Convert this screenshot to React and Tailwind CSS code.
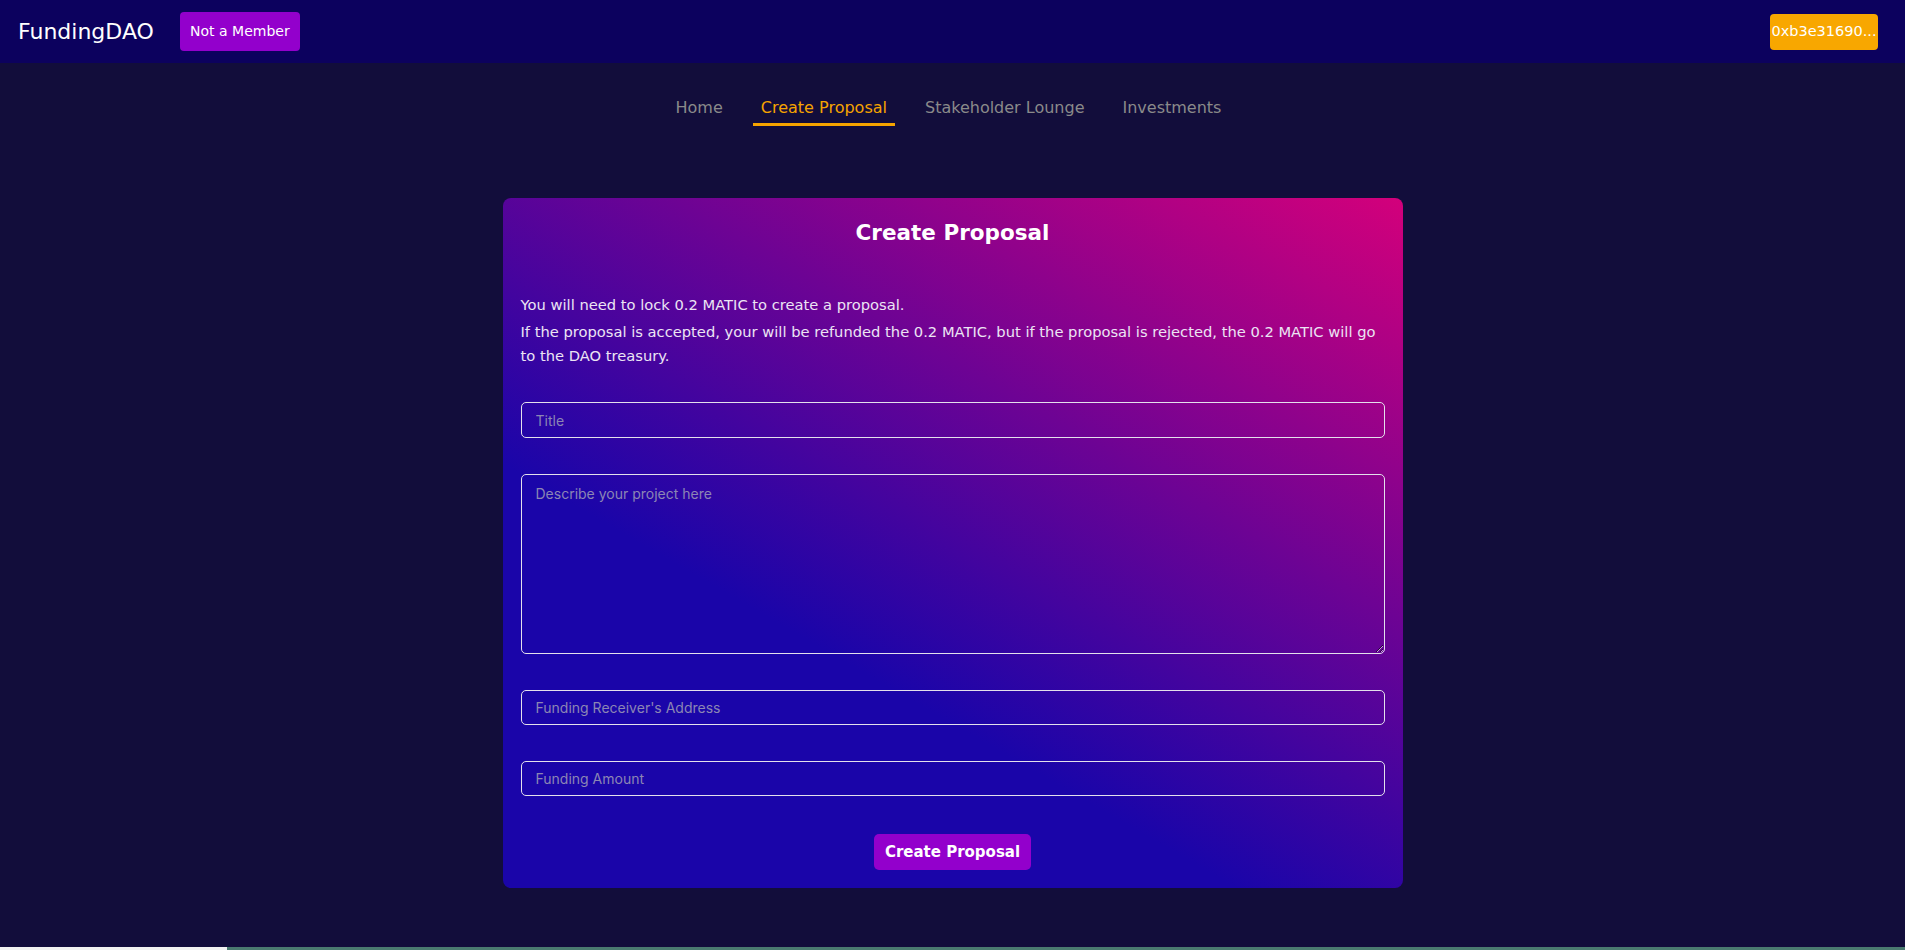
export default function App() {
  return (
    <div className="min-h-screen w-full bg-[#120d3b] flex flex-col font-['DejaVu_Sans',sans-serif]">
      <header className="h-[63px] bg-[#0c015e] flex items-center justify-between pl-[18px] pr-[27px]">
        <div className="flex items-center gap-[26px]">
          <span className="text-white text-[22px]">FundingDAO</span>
          <button className="bg-[#9300cc] text-white text-[14px] h-[39px] w-[120px] rounded-[4px]">Not a Member</button>
        </div>
        <button className="bg-[#f8a700] text-white text-[14.5px] h-[36px] w-[108px] rounded-[4px] whitespace-nowrap">
          0xb3e31690...
        </button>
      </header>

      <nav className="flex justify-center gap-[22px] mt-[33px] pr-[8px] text-[16px]">
        <a className="text-[#8a8a8a] px-[8px] pb-[6px]">Home</a>
        <a className="text-[#f5a300] px-[8px] pb-[3px] border-b-[3px] border-[#f5a300]">Create Proposal</a>
        <a className="text-[#8a8a8a] px-[8px] pb-[6px]">Stakeholder Lounge</a>
        <a className="text-[#8a8a8a] px-[8px] pb-[6px]">Investments</a>
      </nav>

      <main className="flex justify-center mt-[72px]">
        <div className="w-[900px] rounded-[8px] bg-[linear-gradient(30deg,#1a05a9_35%,#6d0394_65%,#d3007b_100%)] px-[18px] pt-[20px] pb-[18px] text-white">
          <h1 className="text-center font-bold text-[21.5px] leading-[30px]">Create Proposal</h1>
          <div className="mt-[45px] text-[14.7px] text-[#ece4f4]">
            <p className="leading-[24px]">You will need to lock 0.2 MATIC to create a proposal.</p>
            <p className="leading-[24px] mt-[3px]">If the proposal is accepted, your will be refunded the 0.2 MATIC, but if the proposal is rejected, the 0.2 MATIC will go to the DAO treasury.</p>
          </div>
          <form className="mt-[34px] flex flex-col gap-[36px] font-['Inter',sans-serif]">
            <input placeholder="Title" className="h-[36px] w-full bg-transparent border border-[#e4e0ec] rounded-[5px] px-[14px] text-[14px] text-white placeholder:text-[#8c86b4] outline-none" />
            <textarea placeholder="Describe your project here" className="h-[180px] w-full bg-transparent border border-[#e4e0ec] rounded-[5px] px-[14px] py-[8px] text-[14px] text-white placeholder:text-[#8c86b4] outline-none" />
            <input placeholder="Funding Receiver's Address" className="h-[35px] w-full bg-transparent border border-[#e4e0ec] rounded-[5px] px-[14px] text-[14px] text-white placeholder:text-[#8c86b4] outline-none" />
            <input placeholder="Funding Amount" className="h-[35px] w-full bg-transparent border border-[#e4e0ec] rounded-[5px] px-[14px] text-[14px] text-white placeholder:text-[#8c86b4] outline-none" />
            <div className="flex justify-center mt-[2px]">
              <button type="button" className="bg-[#9300cc] text-white font-bold text-[15px] font-['DejaVu_Sans',sans-serif] h-[36px] w-[157px] rounded-[5px]">Create Proposal</button>
            </div>
          </form>
        </div>
      </main>
      <div className="flex-1" />
      <div className="flex h-[3px]">
        <div className="w-[227px] bg-[#f2f2f2]" />
        <div className="flex-1 bg-[#4a7a70]" />
      </div>
    </div>
  );
}
